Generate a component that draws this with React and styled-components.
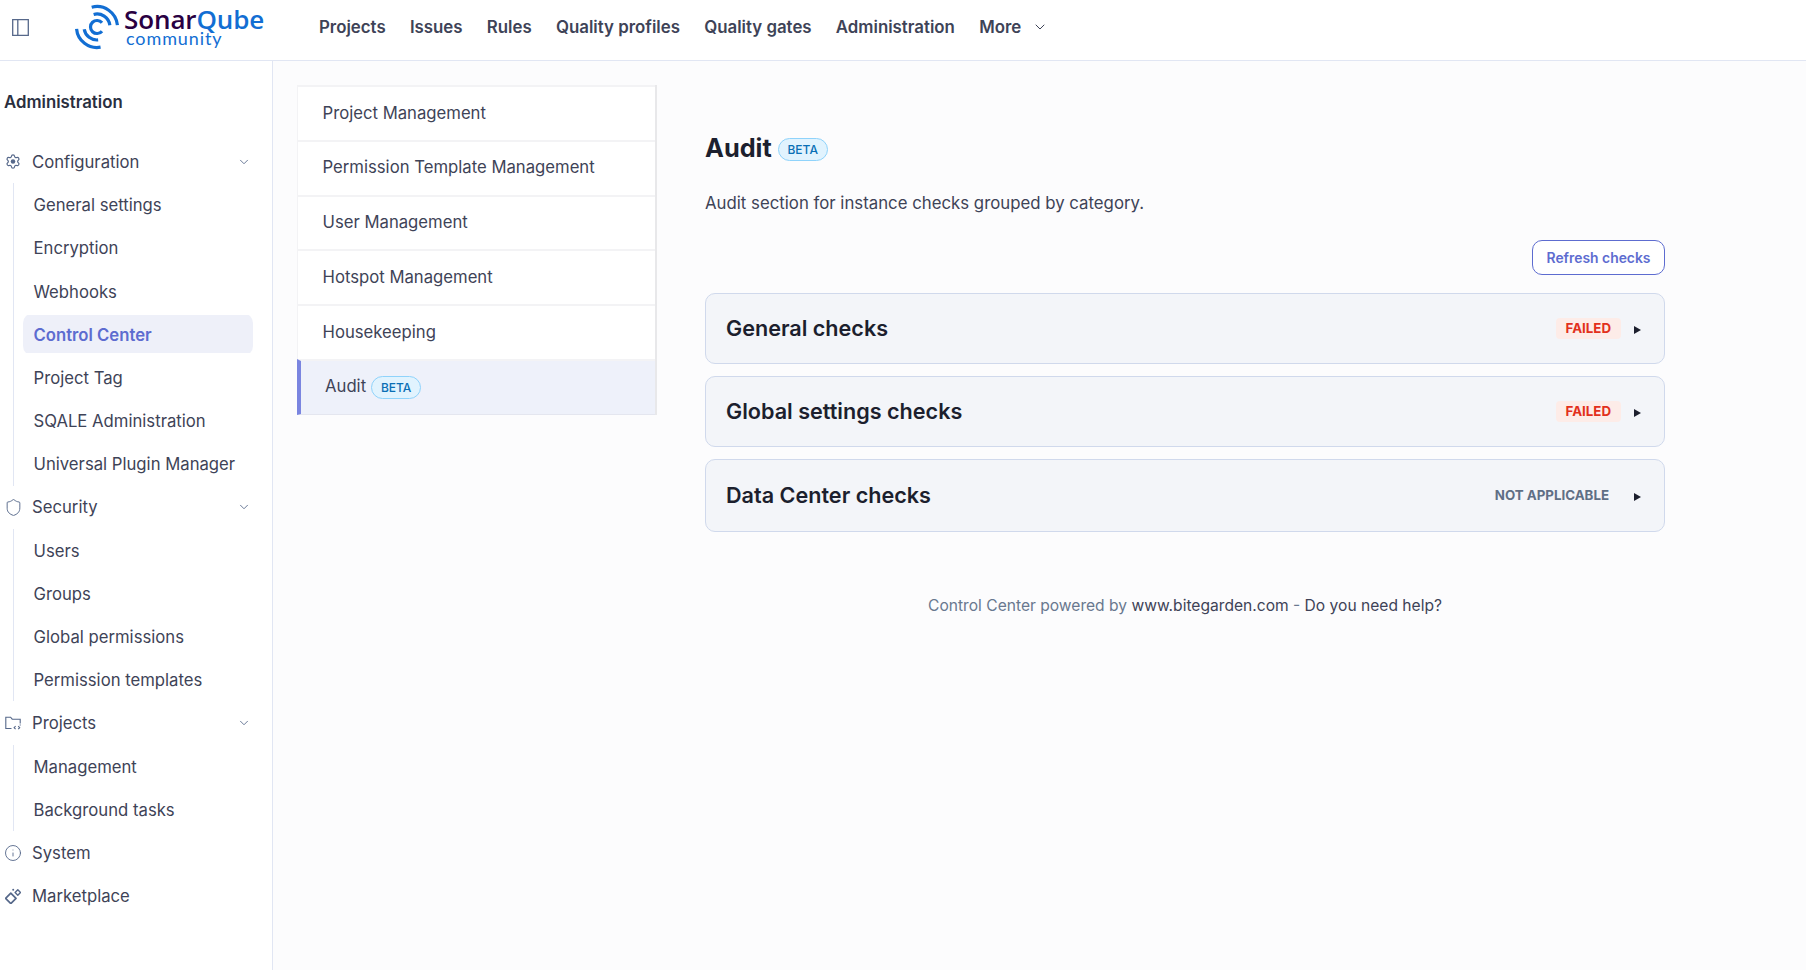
import styled, { createGlobalStyle } from "styled-components";
import { ChevronDown, Shield, Info } from "lucide-react";

const GearIcon = () => (
  <svg width="17" height="17" viewBox="0 0 24 24" fill="none" stroke="currentColor" strokeWidth="1.8" strokeLinejoin="round">
    <path d="M9.67 4.14a2.34 2.34 0 0 1 4.66 0 2.34 2.34 0 0 0 3.32 1.92 2.34 2.34 0 0 1 2.33 4.03 2.34 2.34 0 0 0 0 3.83 2.34 2.34 0 0 1-2.33 4.03 2.34 2.34 0 0 0-3.32 1.91 2.34 2.34 0 0 1-4.66 0 2.34 2.34 0 0 0-3.32-1.91 2.34 2.34 0 0 1-2.33-4.03 2.34 2.34 0 0 0 0-3.83 2.34 2.34 0 0 1 2.33-4.03 2.34 2.34 0 0 0 3.32-1.92z" />
    <circle cx="12" cy="12" r="3.4" fill="currentColor" stroke="none" />
  </svg>
);

const FolderCodeIcon = () => (
  <svg width="16" height="16" viewBox="0 0 16 16" fill="none" stroke="currentColor" strokeWidth="1.1">
    <path d="M6.5 13.5H.8V2.2h4.8l1.6 2h8v4.3" />
    <path d="M10.6 11.2l-1.5 1.5 1.5 1.5M13.2 11.2l1.5 1.5-1.5 1.5" />
    <path d="M15.2 9.6v.9" />
  </svg>
);

const MarketIcon = () => (
  <svg width="16" height="16" viewBox="0 0 16 16" fill="none" stroke="currentColor" strokeWidth="1.7" strokeLinejoin="round">
    <path d="M5.8 5.2l5.2 5.2-5.2 5.2-5.2-5.2z" />
    <path d="M12.8 1.8l2.7 2.7-2.7 2.7-2.7-2.7z" strokeWidth="1.4" />
    <circle cx="8.2" cy="1.8" r="1" fill="currentColor" stroke="none" />
  </svg>
);

const ShieldIcon = () => <BigIcon as={Shield} size={19} strokeWidth={1.2} />;
const InfoIcon = () => <BigIcon as={Info} size={18} strokeWidth={1.2} />;

const sections = [
  { name: "Configuration", icon: GearIcon, links: ["General settings", "Encryption", "Webhooks", "Control Center", "Project Tag", "SQALE Administration", "Universal Plugin Manager"] },
  { name: "Security", icon: ShieldIcon, links: ["Users", "Groups", "Global permissions", "Permission templates"] },
  { name: "Projects", icon: FolderCodeIcon, links: ["Management", "Background tasks"] },
  { name: "System", icon: InfoIcon },
  { name: "Marketplace", icon: MarketIcon },
];

const navItems = ["Projects", "Issues", "Rules", "Quality profiles", "Quality gates", "Administration"];
const subItems = ["Project Management", "Permission Template Management", "User Management", "Hotspot Management", "Housekeeping"];

const checks = [
  { name: "General checks", status: "FAILED", failed: true },
  { name: "Global settings checks", status: "FAILED", failed: true },
  { name: "Data Center checks", status: "NOT APPLICABLE" },
];

function arc(r, from, to) {
  const p = (a) => [24 + r * Math.cos((a * Math.PI) / 180), 24 + r * Math.sin((a * Math.PI) / 180)];
  const [x1, y1] = p(from);
  const [x2, y2] = p(to);
  return `M${x1} ${y1}A${r} ${r} 0 ${Math.abs(to - from) > 180 ? 1 : 0} ${to > from ? 1 : 0} ${x2} ${y2}`;
}

function LogoMark() {
  return (
    <svg width="48" height="48" viewBox="0 0 48 48" fill="none" stroke="#126ed3" strokeWidth="3.2">
      <path d={arc(6.5, -40, -320)} />
      <path d={arc(13, -105, -8)} />
      <path d={arc(20.5, -105, -5)} />
      <path d={arc(13, 170, 85)} />
      <path d={arc(20.5, 175, 80)} />
    </svg>
  );
}

function App() {
  return (
    <>
      <GlobalStyle />
      <Header>
        <ToggleButton>
          <svg width="17" height="17" viewBox="0 0 17 17" fill="none" stroke="currentColor" strokeWidth="1.3">
            <path d="M.7.7h15.6v15.6H.7zM5.8.7v15.6" />
          </svg>
        </ToggleButton>
        <Logo>
          <LogoMark />
          <LogoText>
            <LogoName>Sonar<span>Qube</span></LogoName>
            <LogoEdition>community</LogoEdition>
          </LogoText>
        </Logo>
        <Nav>
          {navItems.map((item) => <NavLink key={item}>{item}</NavLink>)}
          <NavLink>More<ChevronDown size={16} strokeWidth={1.5} /></NavLink>
        </Nav>
      </Header>
      <Body>
        <Sidebar>
          <SidebarTitle>Administration</SidebarTitle>
          {sections.map((section) => (
            <div key={section.name}>
              <SectionRow>
                <SectionIcon><section.icon /></SectionIcon>
                <span>{section.name}</span>
                {section.links && <SectionChevron size={14} strokeWidth={1.5} />}
              </SectionRow>
              {section.links && (
                <SubList>
                  {section.links.map((link) => (
                    <SubLink key={link} $active={link === "Control Center"}>{link}</SubLink>
                  ))}
                </SubList>
              )}
            </div>
          ))}
        </Sidebar>
        <Content>
          <SubNav>
            {subItems.map((item) => <SubNavItem key={item}>{item}</SubNavItem>)}
            <SubNavItem $active>Audit<BetaBadge $small>BETA</BetaBadge></SubNavItem>
          </SubNav>
          <Main>
            <TitleRow>
              <Title>Audit</Title>
              <BetaBadge>BETA</BetaBadge>
            </TitleRow>
            <Description>Audit section for instance checks grouped by category.</Description>
            <Actions><RefreshButton>Refresh checks</RefreshButton></Actions>
            <CheckList>
              {checks.map((check) => (
                <CheckCard key={check.name} $tall={!check.failed}>
                  <CheckName>{check.name}</CheckName>
                  <Status $failed={check.failed}>{check.status}</Status>
                  <Arrow />
                </CheckCard>
              ))}
            </CheckList>
            <Footer>
              Control Center powered by <FooterLink>www.bitegarden.com</FooterLink> - <FooterLink>Do you need help?</FooterLink>
            </Footer>
          </Main>
        </Content>
      </Body>
    </>
  );
}

const GlobalStyle = createGlobalStyle`
  html, body {
    margin: 0;
    height: 100%;
    overflow: hidden;
    background: #fcfcfd;
    font-family: Inter, "Liberation Sans", sans-serif;
    color: #3e4357;
  }
`;

const Header = styled.header`
  display: flex;
  align-items: center;
  box-sizing: content-box;
  height: 54px;
  padding-bottom: 6px;
  background: #fff;
  border-bottom: 1px solid #e1e6f3;
`;

const ToggleButton = styled.div`
  display: flex;
  width: 18px;
  margin-left: 12px;
  color: #56688a;
`;

const Logo = styled.div`
  display: flex;
  align-items: center;
  margin-left: 43px;
  width: 246px;
`;

const LogoText = styled.div`
  display: flex;
  flex-direction: column;
  margin-left: 3px;
  margin-top: -2px;
`;

const LogoName = styled.div`
  font: 600 26px/24px "Open Sans", sans-serif;
  color: #290042;
  letter-spacing: -0.1px;

  span {
    color: #126ed3;
  }
`;

const LogoEdition = styled.div`
  font: 400 18px/14px Lato, sans-serif;
  color: #126ed3;
  letter-spacing: 0.9px;
  margin-left: 2px;
`;

const Nav = styled.nav`
  display: flex;
  align-items: center;
  gap: 24.2px;
`;

const NavLink = styled.a`
  display: flex;
  align-items: center;
  gap: 11px;
  font-size: 16.85px;
  font-weight: 600;
  color: #3e4357;
`;

const Body = styled.div`
  display: flex;
  height: 909px;
`;

const Sidebar = styled.aside`
  flex: none;
  box-sizing: border-box;
  width: 273px;
  padding-top: 19px;
  background: #fff;
  border-right: 1px solid #e1e6f3;
`;

const SidebarTitle = styled.h2`
  margin: 0 0 16px 4px;
  font-size: 16.8px;
  font-weight: 600;
  line-height: 44px;
  color: #2a2f40;
`;

const SectionRow = styled.div`
  display: flex;
  align-items: center;
  height: 43.2px;
  padding-left: 5px;
  font-size: 16.7px;
  color: #3e4357;

  span {
    margin-left: 11px;
  }
`;

const SectionIcon = styled.div`
  display: flex;
  flex: none;
  align-items: center;
  justify-content: center;
  width: 16px;
  color: #56688a;
`;

const BigIcon = styled.svg`
  flex: none;
`;

const SectionChevron = styled(ChevronDown)`
  margin-left: auto;
  margin-right: 21.5px;
  color: #56688a;
`;

const SubList = styled.div`
  margin-left: 13px;
  border-left: 1.5px solid #e1e6f3;
`;

const SubLink = styled.div`
  display: flex;
  align-items: center;
  box-sizing: border-box;
  width: 230px;
  height: 43.2px;
  margin-left: 8.5px;
  padding: 1px 0 0 11px;
  font-size: 16.7px;
  font-weight: ${(p) => (p.$active ? 600 : 400)};
  color: ${(p) => (p.$active ? "#5d6cd0" : "#3e4357")};
  background: ${(p) => (p.$active ? "linear-gradient(#eef0f9, #eef0f9) center / 100% 38px no-repeat" : "none")};
  border-radius: 10px;
`;

const Content = styled.div`
  display: flex;
  flex: 1;
  align-items: flex-start;
  padding: 24px 0 0 24px;
`;

const SubNav = styled.div`
  flex: none;
  width: 360px;
  box-sizing: border-box;
  background: #fff;
  border-right: 2px solid #e8e8ea;
`;

const SubNavItem = styled.div`
  display: flex;
  align-items: center;
  box-sizing: border-box;
  height: ${(p) => (p.$active ? "56px" : "54.8px")};
  padding-left: ${(p) => (p.$active ? "24px" : "24.5px")};
  padding-bottom: ${(p) => (p.$active ? "3px" : "1.5px")};
  font-size: 16.7px;
  color: #3e4357;
  background: ${(p) => (p.$active ? "#eef1fa" : "#fff")};
  border-top: 2px solid #f3f3f5;
  border-left: ${(p) => (p.$active ? "4px solid #7a85e0" : "1px solid #f3f3f5")};
  border-bottom: ${(p) => (p.$active ? "1px solid #e4e6ef" : "none")};
`;

const Main = styled.main`
  width: 960px;
  margin-left: 48px;
  padding-top: 48px;
`;

const TitleRow = styled.div`
  display: flex;
  align-items: center;
  gap: 6px;
`;

const Title = styled.h1`
  margin: 0;
  font-size: 25.3px;
  font-weight: 700;
  line-height: 30px;
  color: #1c1f2e;
`;

const BetaBadge = styled.span`
  display: inline-flex;
  align-items: center;
  justify-content: center;
  box-sizing: border-box;
  width: 50px;
  height: 23px;
  margin-left: ${(p) => (p.$small ? "5px" : 0)};
  margin-top: ${(p) => (p.$small ? "3px" : "2px")};
  font-size: 12px;
  font-weight: 500;
  color: #0a6fb5;
  background: #e1f3fe;
  border: 1px solid #8fd3fb;
  border-radius: 12px;
`;

const Description = styled.p`
  margin: 28px 0 0;
  font-size: 16.8px;
  line-height: 24px;
  color: #3e4357;
`;

const Actions = styled.div`
  display: flex;
  justify-content: flex-end;
  margin-top: 25px;
`;

const RefreshButton = styled.button`
  width: 133px;
  height: 35px;
  padding: 0;
  font: 600 13.9px Inter, sans-serif;
  color: #5d6cd0;
  background: #fff;
  border: 1px solid #5d6cd0;
  border-radius: 10px;
`;

const CheckList = styled.div`
  display: flex;
  flex-direction: column;
  gap: 12px;
  margin-top: 18px;
`;

const CheckCard = styled.div`
  display: flex;
  align-items: center;
  box-sizing: border-box;
  height: ${(p) => (p.$tall ? "73px" : "71px")};
  padding: 0 23px 0 20px;
  background: #f3f5f9;
  border: 1px solid #d0d9ec;
  border-radius: 10px;
`;

const CheckName = styled.div`
  flex: 1;
  padding-bottom: 1px;
  font-size: 21.6px;
  font-weight: 600;
  color: #1c1f2e;
`;

const Status = styled.span`
  padding: ${(p) => (p.$failed ? "0 10px" : 0)};
  margin-right: ${(p) => (p.$failed ? "13px" : "25px")};
  font-size: 13.3px;
  font-weight: 700;
  line-height: 21px;
  color: ${(p) => (p.$failed ? "#e2301c" : "#5f6f85")};
  background: ${(p) => (p.$failed ? "#fdece8" : "none")};
  border-radius: 4px;
`;

const Arrow = styled.span`
  width: 0;
  height: 0;
  margin-top: 2px;
  border-left: 7px solid #1c1f2e;
  border-top: 4px solid transparent;
  border-bottom: 4px solid transparent;
`;

const Footer = styled.div`
  margin-top: 61.5px;
  font-size: 15.6px;
  line-height: 24px;
  text-align: center;
  color: #69788f;
`;

const FooterLink = styled.span`
  color: #3e4357;
`;

export default App;
